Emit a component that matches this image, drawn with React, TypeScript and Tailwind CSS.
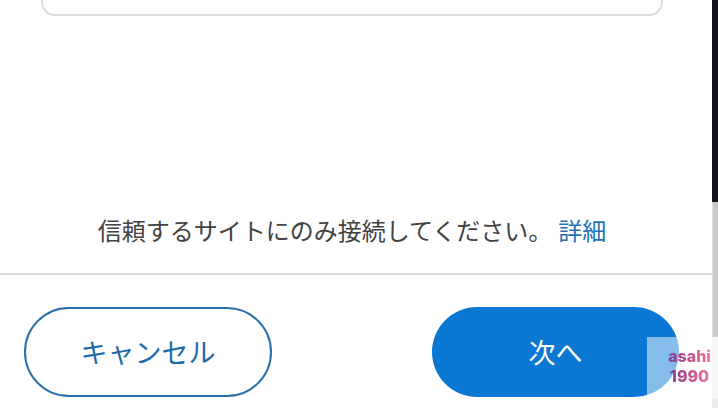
import React from 'react';

const cjk = '"Noto Sans CJK JP", "Noto Sans", sans-serif';

export default function App() {
  return (
    <div className="relative flex w-[718px] h-[408px] overflow-hidden bg-white" style={{ fontFamily: cjk }}>
      <div className="flex flex-col w-[712px]">
        {/* bottom of the previous card */}
        <div className="-mt-[40px] ml-[41px] w-[622px] h-[56px] rounded-[14px] border-2 border-[#dcdcdc]" />

        <div className="mt-[198px] flex justify-center pr-[8px] h-[32px] leading-[32px] text-[24px]">
          <span className="text-[#424242]">信頼するサイトにのみ接続してください。</span>
          <span className="ml-[6px] text-[#1f72b5]">詳細</span>
        </div>

        <div className="mt-[27px] h-[2px] bg-[#dadada]" />

        <div className="mt-[32px] flex justify-between pl-[24px] pr-[33px]">
          <button className="w-[248px] h-[90px] rounded-full border-2 border-[#2a6ea7] text-[27px] text-[#2069a9]">
            キャンセル
          </button>
          <button className="w-[247px] h-[90px] rounded-full bg-[#0a78d3] text-[27px] text-white">
            次へ
          </button>
        </div>
      </div>

      {/* scrollbar strip */}
      <div className="flex flex-col w-[6px]">
        <div className="h-[202px] bg-[#0f1218]" />
        <div className="h-[135px] bg-[#c9c9c9] border-l border-[#dedede]" />
        <div className="flex-1 bg-[#ececec]" />
      </div>

      {/* watermark */}
      <div
        className="absolute left-[647px] top-[337px] w-[71px] h-[62px] bg-white/50 flex justify-center pt-[9px] pl-[14px]"
        style={{ fontFamily: 'Inter, "Liberation Sans", sans-serif' }}
      >
        <p className="text-center text-[16px] leading-[20px] font-extrabold bg-gradient-to-r from-[#7a3c8c] via-[#c0508a] to-[#f27493] bg-clip-text text-transparent">
          asahi
          <br />
          1990
        </p>
      </div>
    </div>
  );
}
